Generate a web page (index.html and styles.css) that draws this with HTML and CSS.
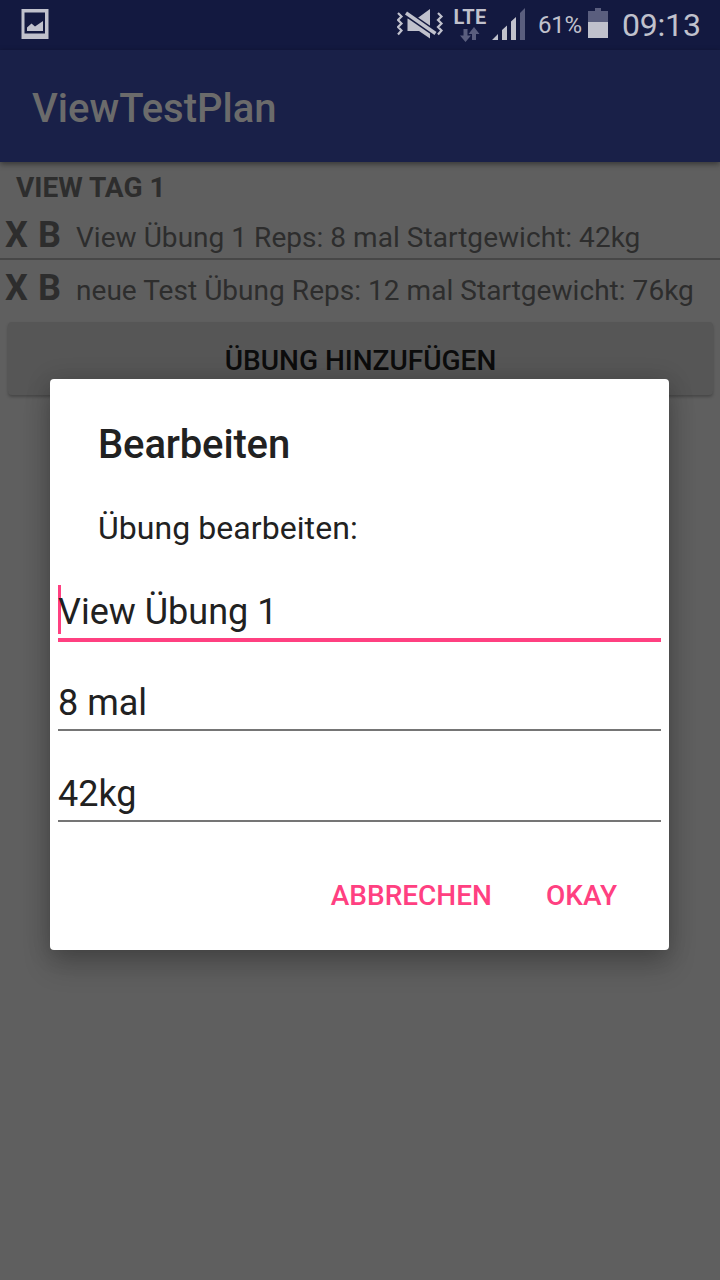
FILE: index.html
```
<!DOCTYPE html>
<html lang="de">
<head>
<meta charset="utf-8">
<title>ViewTestPlan</title>
<link rel="stylesheet" href="styles.css">
</head>
<body>
<div class="screen">
  <header class="status">
    <svg class="shot" width="28" height="30" viewBox="0 0 28 30"><path fill="#c0c1cc" fill-rule="evenodd" d="M0.500 0H27.500V30H0.500ZM3.500 3.500V24.500H24V3.500Z"/><path fill="#c0c1cc" d="M6 22V18.500L10.500 14.500 14 17.500 22 12V22Z"/></svg>
    <svg class="mute" width="48" height="32" viewBox="0 0 48 32"><path fill="#c0c1cc" d="M10.500 10.500H20L33 1V30.500L22 23H10.500Z"/><path d="M8 4.500L40 26.500" stroke="#131940" stroke-width="6.400"/><path d="M9 5L38.500 25.500" stroke="#c0c1cc" stroke-width="3.600"/><path fill="none" stroke="#c0c1cc" stroke-width="2.200" d="M1 5L4.500 8.500 1 12 4.500 15.500 1 19 4.500 22.500 1 26.500M41 5L44.500 8.500 41 12 44.500 15.500 41 19 44.500 22.500 41 26.500"/></svg>
    <div class="network">
      <span class="lte">LTE</span>
      <svg width="20" height="15" viewBox="0 0 20 15" fill="#5a5e7e"><path d="M3.500 2H7.500V8.500H11L5.500 15 0 8.500H3.500Z"/><path d="M12 13V7H8.500L14 0 19.500 7H16V13Z"/></svg>
    </div>
    <svg class="signal" width="34" height="32" viewBox="0 0 34 32"><path fill="#c0c1cc" d="M0 32L6 26V32ZM10 22L15 17.500V32H10ZM19 13.500L24 9V32H19Z"/><path fill="#5a5e7e" d="M28 5L33 0V32H28Z"/></svg>
    <span class="percent">61%</span>
    <svg class="battery" width="20" height="30" viewBox="0 0 20 30"><path fill="#5a5e7e" d="M0 3H7V0H13V3H20V14H0Z"/><path fill="#c0c1cc" d="M0 14H20V30H0Z"/></svg>
    <span class="clock">09:13</span>
  </header>
  <div class="appbar">ViewTestPlan</div>
  <main class="content">
    <h2 class="day">VIEW TAG 1</h2>
    <div class="row"><b class="del">X</b><b class="edit">B</b><span class="exercise">View Übung 1 Reps: 8 mal Startgewicht: 42kg</span></div>
    <div class="row last"><b class="del">X</b><b class="edit">B</b><span class="exercise">neue Test Übung Reps: 12 mal Startgewicht: 76kg</span></div>
    <div class="add">ÜBUNG HINZUFÜGEN</div>
  </main>
  <section class="dialog">
    <h1 class="title">Bearbeiten</h1>
    <p class="message">Übung bearbeiten:</p>
    <div class="field focused"><i class="caret"></i><span class="value">View Übung 1</span></div>
    <div class="field">8 mal</div>
    <div class="field weight">42kg</div>
    <div class="actions"><span class="cancel">ABBRECHEN</span><span class="ok">OKAY</span></div>
  </section>
</div>
</body>
</html>
```
FILE: styles.css
```
* { box-sizing: border-box; }
body { margin: 0; font-family: Roboto, sans-serif; }
.screen { position: relative; width: 720px; height: 1280px; background: #5f5f5f; overflow: hidden; white-space: nowrap; }
.status { display: flex; align-items: flex-start; height: 50px; padding-left: 21px; background: #131940; color: #c0c1cc; }
.shot { margin-top: 9px; }
.mute { margin: 8px 0 0 348px; }
.network { display: flex; flex-direction: column; align-items: center; width: 34px; margin: 7px 0 0 8px; }
.lte { font-size: 20px; font-weight: 700; line-height: 20px; letter-spacing: .3px; }
.signal { margin: 8px 0 0 5px; }
.percent { width: 44px; margin: 10px 0 0 12px; font-size: 24px; line-height: 30px; letter-spacing: -.3px; }
.battery { margin: 8px 0 0 6px; }
.clock { margin: 5px 0 0 14px; font-size: 32px; line-height: 40px; letter-spacing: -.2px; }
.appbar { position: relative; height: 112px; padding: 4px 0 0 32px; background: #192048; color: #6b6b6b; font-size: 40px; font-weight: 500; line-height: 110px; box-shadow: 0 2px 6px rgba(0, 0, 0, .45); }
.day { margin: 0; height: 45px; padding: 5px 0 0 16px; color: #2d2d2d; font-size: 28px; font-weight: 700; line-height: 42px; }
.row { display: flex; align-items: baseline; height: 53px; padding: 7px 0 0 5px; border-bottom: 2px solid #474747; color: #2d2d2d; font-size: 28px; line-height: 42px; }
.last { border-bottom: 0; }
.del, .edit { font-size: 36px; }
.del { width: 33px; }
.edit { width: 38px; }
.exercise { letter-spacing: .04px; }
.add { height: 73px; margin: 9px 7px 0 8px; padding-top: 2px; border-radius: 4px; background: #565656; color: #0c0c0c; font-size: 28px; font-weight: 500; line-height: 73px; text-align: center; box-shadow: 0 2px 3px rgba(0, 0, 0, .25); }
.dialog { position: absolute; left: 50px; top: 379px; width: 619px; height: 571px; padding: 43px 8px 0; border-radius: 4px; background: #fff; color: #212121; box-shadow: 0 16px 28px rgba(0, 0, 0, .2), 0 2px 24px rgba(0, 0, 0, .18); }
.title { margin: 0 40px; font-size: 40px; font-weight: 500; line-height: 46px; letter-spacing: -.15px; }
.message { margin: 41px 40px 38px; font-size: 32px; line-height: 38px; letter-spacing: .06px; }
.field { height: 55px; margin-bottom: 36px; padding-top: 1px; border-bottom: 2px solid #757575; font-size: 36px; line-height: 53px; }
.focused { position: relative; height: 57px; margin-bottom: 34px; border-bottom: 4px solid #ff4081; }
.caret { position: absolute; left: 0; top: 0; width: 3px; height: 49px; background: #ff4081; }
.value { position: relative; }
.weight { margin-bottom: 57px; }
.actions { display: flex; justify-content: flex-end; gap: 54px; padding-right: 44px; color: #ff4081; font-size: 28px; font-weight: 500; line-height: 34px; }
```
